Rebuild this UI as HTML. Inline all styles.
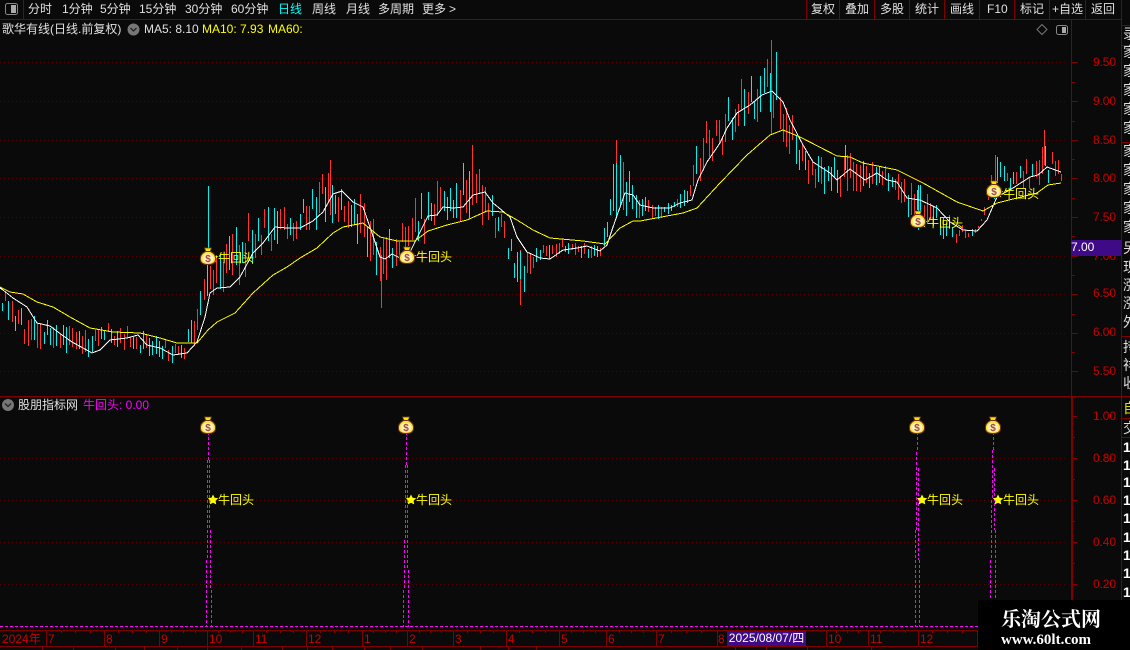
<!DOCTYPE html>
<html>
<head>
<meta charset="utf-8">
<style>
html,body{margin:0;padding:0;background:#0a0a0a}
#r{position:relative;width:1130px;height:650px;overflow:hidden;background:#0a0a0a;font-family:"Liberation Sans","WenQuanYi Zen Hei","Noto Sans CJK SC",sans-serif;font-size:12px;color:#e0e0e0}
#r div{position:absolute;white-space:nowrap}
.t{line-height:14px;height:14px}
.y{color:#ff0}
.p{color:#c80000;left:1093px;letter-spacing:-.1px}
.m{color:#c80000;top:632px;font-size:12px;line-height:14px}
.s{left:1123px;font-size:14px;line-height:16px;color:#ddd;width:7px;overflow:hidden}
.o{left:1123px;font-size:14px;font-weight:bold;color:#fff;line-height:16px;width:7px;overflow:hidden}
svg{position:absolute;left:0;top:0}
</style>
</head>
<body>
<div id="r">
<svg id="c" width="1130" height="650" viewBox="0 0 1130 650">
<defs>
<g id="bag">
<path d="M-3.500-9H3.500L2-5.500H-2Z" fill="#ffe000" stroke="#7a4a10" stroke-width=".7"/>
<path d="M-2.500-5.500H2.500C6.500-3.500 8 -.5 7.500 3C7 6.500 4 7.500 0 7.500C-4 7.500-7 6.500-7.500 3C-8-.5-6.500-3.500-2.500-5.500Z" fill="#ffe040" stroke="#6b3515" stroke-width="1"/>
<ellipse cx="0" cy="1.500" rx="5.500" ry="4.700" fill="#fff2b8"/>
<text x="0" y="5" text-anchor="middle" font-family="Liberation Sans" font-weight="bold" font-size="10" fill="#a04a40">$</text>
</g>
</defs>
<g id="grid" stroke="#520000" stroke-width="1" stroke-dasharray="1 3" shape-rendering="crispEdges">
<path d="M0 62.500H1068M0 101.500H1068M0 140.500H1068M0 178.500H1068M0 217.500H1068M0 256.500H1068M0 294.500H1068M0 333.500H1068M0 371.500H1068M0 458.500H1068M0 500.500H1068M0 542.500H1068M0 584.500H1068"/>
</g>
<g id="bars" stroke-width="1" shape-rendering="crispEdges"></g>
<polyline id="w" fill="none" stroke="#fff" stroke-width="1" shape-rendering="crispEdges"></polyline>
<polyline id="l" fill="none" stroke="#ff0" stroke-width="1" shape-rendering="crispEdges"></polyline>

<g fill="none" stroke="#800000" shape-rendering="crispEdges">
<path d="M0 19.500H1122M0 396.500H1130M0 630.500H978M0 646.500H978"/>
<path d="M1071.500 19V396M1071.500 397V630M1072.500 397V630M1121.500 0V630"/>
<path d="M23.500 0V19M806.500 0V19M839.500 0V19M874.500 0V19M909.500 0V19M944.500 0V19M979.500 0V19M1014.500 0V19M1049.500 0V19M1085.500 0V19"/>
<path d="M1071 62.500H1078M1071 82.500H1075M1071 101.500H1078M1071 121.500H1075M1071 140.500H1078M1071 159.500H1075M1071 178.500H1078M1071 198.500H1075M1071 217.500H1078M1071 236.500H1075M1071 256.500H1078M1071 275.500H1075M1071 294.500H1078M1071 314.500H1075M1071 333.500H1078M1071 352.500H1075M1071 371.500H1078"/>
<path d="M1072 416.500H1077M1072 437.500H1075M1072 458.500H1077M1072 479.500H1075M1072 500.500H1077M1072 521.500H1075M1072 542.500H1077M1072 563.500H1075M1072 584.500H1077M1072 605.500H1075"/>
<path d="M46.500 630V646M104.500 630V646M159.500 630V646M207.500 630V646M253.500 630V646M306.500 630V646M362.500 630V646M407.500 630V646M453.500 630V646M506.500 630V646M559.500 630V646M606.500 630V646M656.500 630V646M717.500 630V646M826.500 630V646M868.500 630V646M918.500 630V646M977.500 630V646"/>
<path d="M61.500 630V633M75.500 630V633M90.500 630V633M118.500 630V633M132.500 630V633M146.500 630V633M171.500 630V633M183.500 630V633M195.500 630V633M218.500 630V633M230.500 630V633M242.500 630V633M266.500 630V633M280.500 630V633M293.500 630V633M320.500 630V633M334.500 630V633M348.500 630V633M373.500 630V633M385.500 630V633M396.500 630V633M419.500 630V633M430.500 630V633M441.500 630V633M467.500 630V633M480.500 630V633M493.500 630V633M519.500 630V633M532.500 630V633M545.500 630V633M571.500 630V633M583.500 630V633M595.500 630V633M619.500 630V633M631.500 630V633M643.500 630V633M671.500 630V633M686.500 630V633M701.500 630V633M836.500 630V633M847.500 630V633M858.500 630V633M880.500 630V633M893.500 630V633M905.500 630V633M932.500 630V633M947.500 630V633M962.500 630V633"/>
<path d="M42.500 646V650M73.500 646V650M115.500 646V650M144.500 646V650M177.500 646V650M207.500 646V650M241.500 646V650M282.500 646V650M307.500 646V650M332.500 646V650M364.500 646V650M390.500 646V650M422.500 646V650M480.500 646V650M508.500 646V650M536.500 646V650M735.500 646V650M766.500 646V650M807.500 646V650M871.500 646V650"/>
<path d="M1122 25.500H1130M1122 45.500H1130M1122 142.500H1130M1122 418.500H1130M1122 437.500H1130"/>
<path d="M1122 336.500H1130"/>
</g>
<g fill="none" stroke="#f0f" stroke-width="1" stroke-dasharray="3 2" shape-rendering="crispEdges">
<path d="M0 626.500H978"/>
<path d="M208.500 417V460M207.500 460V560M206.500 560V627M209.500 460V530M210.500 530V590M211.500 590V627"/>
<path d="M406.500 417V465M405.500 465V540M404.500 540V590M403.500 590V627M407.500 465V570M408.500 570V627"/>
<path d="M917.500 417V452M916.500 452V530M915.500 530V627M918.500 468V560M919.500 560V627"/>
<path d="M993.500 417V450M992.500 450V500M991.500 500V560M990.500 560V627M994.500 468V530M995.500 530V627"/>
</g>
<path id="stars" fill="#ff0" d=""></path>
<use href="#bag" x="208" y="257"/>
<use href="#bag" x="407" y="256"/>
<use href="#bag" x="918" y="220"/>
<use href="#bag" x="994" y="190"/>
<use href="#bag" x="208" y="426"/>
<use href="#bag" x="406" y="426"/>
<use href="#bag" x="917" y="426"/>
<use href="#bag" x="993" y="426"/>
<!-- small icons -->
<rect x="5.500" y="3.500" width="12" height="11" rx="2" fill="none" stroke="#888"/>
<rect x="11" y="5" width="5" height="8" fill="#aaa"/>
<rect x="1056.500" y="25.500" width="11" height="9" rx="2" fill="none" stroke="#888"/>
<rect x="1062" y="27" width="4" height="6" fill="#aaa"/>
<path d="M1042 24.500L1047 29.500L1042 34.500L1037 29.500Z" fill="none" stroke="#777"/>
<circle cx="133.500" cy="29.500" r="6" fill="#777"/>
<path d="M130.500 28L133.500 31L136.500 28" fill="none" stroke="#222" stroke-width="1.300"/>
<circle cx="8" cy="405" r="6" fill="#777"/>
<path d="M5 403.500L8 406.500L11 403.500" fill="none" stroke="#222" stroke-width="1.300"/>
</svg>

<div class="t" style="left:28px;top:2px">分时</div>
<div class="t" style="left:62px;top:2px">1分钟</div>
<div class="t" style="left:100px;top:2px">5分钟</div>
<div class="t" style="left:139px;top:2px">15分钟</div>
<div class="t" style="left:185px;top:2px">30分钟</div>
<div class="t" style="left:231px;top:2px">60分钟</div>
<div class="t" style="left:278px;top:2px;color:#0ff">日线</div>
<div class="t" style="left:312px;top:2px">周线</div>
<div class="t" style="left:346px;top:2px">月线</div>
<div class="t" style="left:378px;top:2px">多周期</div>
<div class="t" style="left:422px;top:2px">更多</div>
<div class="t" style="left:449px;top:2px">&gt;</div>

<div class="t" style="left:811px;top:2px">复权</div>
<div class="t" style="left:845px;top:2px">叠加</div>
<div class="t" style="left:880px;top:2px">多股</div>
<div class="t" style="left:915px;top:2px">统计</div>
<div class="t" style="left:950px;top:2px">画线</div>
<div class="t" style="left:987px;top:2px">F10</div>
<div class="t" style="left:1020px;top:2px">标记</div>
<div class="t" style="left:1052px;top:2px">+自选</div>
<div class="t" style="left:1091px;top:2px">返回</div>

<div class="t" style="left:2px;top:22px">歌华有线(日线.前复权)</div>
<div class="t" style="left:144px;top:22px">MA5: 8.10</div>
<div class="t y" style="left:202px;top:22px">MA10: 7.93</div>
<div class="t y" style="left:268px;top:22px">MA60:</div>

<div class="t" style="left:18px;top:398px">股朋指标网</div>
<div class="t" style="left:83px;top:398px;color:#f0f">牛回头: 0.00</div>

<div class="t p" style="top:55px">9.50</div>
<div class="t p" style="top:94px">9.00</div>
<div class="t p" style="top:133px">8.50</div>
<div class="t p" style="top:171px">8.00</div>
<div class="t p" style="top:210px">7.50</div>
<div class="t p" style="top:249px">7.00</div>
<div class="t p" style="top:286px">6.50</div>
<div class="t p" style="top:325px">6.00</div>
<div class="t p" style="top:364px">5.50</div>
<div class="t p" style="top:409px">1.00</div>
<div class="t p" style="top:451px">0.80</div>
<div class="t p" style="top:493px">0.60</div>
<div class="t p" style="top:535px">0.40</div>
<div class="t p" style="top:577px">0.20</div>

<div class="t" style="left:1071px;top:240px;width:50px;height:16px;line-height:15px;background:#3f0a85;color:#fff">7.00</div>

<div class="t y" style="left:218px;top:251px">牛回头</div>
<div class="t y" style="left:416px;top:250px">牛回头</div>
<div class="t y" style="left:927px;top:216px">牛回头</div>
<div class="t y" style="left:1003px;top:187px">牛回头</div>
<div class="t y" style="left:218px;top:493px">牛回头</div>
<div class="t y" style="left:416px;top:493px">牛回头</div>
<div class="t y" style="left:927px;top:493px">牛回头</div>
<div class="t y" style="left:1003px;top:493px">牛回头</div>

<div class="s" style="top:26px">录</div>
<div class="s" style="top:44px">家</div><div class="s" style="top:63px">家</div><div class="s" style="top:82px">家</div><div class="s" style="top:101px">家</div><div class="s" style="top:120px">家</div>
<div class="s" style="top:143px">家</div><div class="s" style="top:162px">家</div><div class="s" style="top:181px">家</div><div class="s" style="top:200px">家</div><div class="s" style="top:219px">家</div>
<div class="s" style="top:240px">另</div>
<div class="s" style="top:259px">现</div><div class="s" style="top:277px">涨</div><div class="s" style="top:295px">涨</div><div class="s" style="top:314px">外</div>
<div class="s" style="top:339px">抟</div><div class="s" style="top:357px">祥</div><div class="s" style="top:375px">收</div>
<div class="s" style="top:400px;color:#dd0">自</div>
<div class="s" style="top:420px">交</div>
<div class="o" style="top:439px">1</div><div class="o" style="top:457px">1</div><div class="o" style="top:474px">1</div><div class="o" style="top:492px">1</div><div class="o" style="top:510px">1</div><div class="o" style="top:529px">1</div><div class="o" style="top:547px">1</div><div class="o" style="top:565px">1</div><div class="o" style="top:584px">1</div>

<div class="m" style="left:2px">2024年</div>
<div class="m" style="left:48px">7</div>
<div class="m" style="left:106px">8</div>
<div class="m" style="left:161px">9</div>
<div class="m" style="left:209px">10</div>
<div class="m" style="left:255px">11</div>
<div class="m" style="left:308px">12</div>
<div class="m" style="left:364px">1</div>
<div class="m" style="left:409px">2</div>
<div class="m" style="left:455px">3</div>
<div class="m" style="left:508px">4</div>
<div class="m" style="left:561px">5</div>
<div class="m" style="left:608px">6</div>
<div class="m" style="left:658px">7</div>
<div class="m" style="left:718px">8</div>
<div class="m" style="left:828px">10</div>
<div class="m" style="left:870px">11</div>
<div class="m" style="left:920px">12</div>
<div style="left:727px;top:631px;width:79px;height:15px;background:#3f0a85;color:#fff;line-height:15px;text-align:center">2025/08/07/四</div>

<div style="left:978px;top:600px;width:152px;height:50px;background:#000"></div>
<div style="left:978px;top:609px;width:146px;text-align:center;color:#fff;font:bold 20px/22px 'Liberation Serif','Noto Serif CJK SC',serif">乐淘公式网</div>
<div style="left:978px;top:632px;width:136px;text-align:center;color:#fff;font:bold 15px/16px 'Liberation Serif',serif">www.60lt.com</div>
</div>
<script>
var W=[0,288,3,290,13,298,27,307,37,323,50,326,62,335,72,342,83,348,92,353,100,350,110,340,127,338,138,335,147,345,160,348,173,355,187,353,197,342,205,317,210,293,217,288,230,287,240,277,253,253,263,243,275,227,287,228,300,228,313,221,323,212,333,194,342,191,353,202,363,207,372,233,380,257,385,259,392,254,400,258,410,252,428,216,437,215,443,207,453,208,463,207,473,195,485,192,493,203,510,217,517,237,527,252,540,258,550,259,563,250,577,248,587,246,600,251,607,245,613,227,625,193,633,195,640,205,653,208,670,208,680,203,692,200,698,180,707,162,720,143,727,128,737,113,750,105,762,95,772,91,783,102,790,120,803,145,813,162,830,173,837,180,850,169,865,180,877,173,887,180,897,182,907,198,920,200,937,208,950,222,963,230,977,231,987,220,997,197,1013,188,1030,177,1038,175,1047,167,1061,172];
var Y=[0,287,10,292,23,294,37,302,53,307,70,317,90,328,113,332,140,333,160,338,177,343,197,343,208,330,217,322,235,313,253,293,273,275,287,267,300,258,317,248,333,233,343,227,363,223,380,237,397,241,415,241,428,231,447,225,467,220,487,211,503,212,517,220,533,230,550,238,583,241,605,244,620,228,633,221,640,221,683,213,697,208,720,183,747,155,770,135,783,130,800,137,837,156,850,157,863,163,897,170,923,183,957,202,983,211,997,203,1017,198,1037,193,1048,185,1061,183];
var T=[0,288,30,310,60,320,80,330,100,322,130,325,160,335,180,345,195,310,205,250,215,250,225,240,240,220,260,200,275,200,290,210,310,190,330,160,345,180,360,190,370,215,385,225,395,230,405,215,415,190,430,180,450,180,470,150,485,180,500,210,515,245,530,250,560,235,580,240,600,245,610,190,616,140,625,160,640,195,670,200,690,180,700,125,720,110,740,70,760,70,771,50,785,90,800,140,830,160,846,145,870,160,900,170,920,185,935,200,960,225,980,225,990,170,996,155,1010,170,1030,155,1044,140,1062,165];
var B=[0,310,20,345,40,350,60,360,80,365,100,350,130,350,150,360,178,368,195,350,205,300,220,295,240,290,265,255,290,245,310,240,330,225,345,225,360,250,375,285,381,300,395,270,410,260,430,240,450,220,470,225,490,235,510,265,520,300,535,270,560,255,600,262,612,235,630,215,645,225,670,215,690,210,710,170,740,135,770,120,775,130,790,160,810,190,835,200,860,195,890,195,905,220,925,235,950,245,975,235,985,215,1000,190,1020,190,1050,185,1062,185];
function pts(a){var s=[];for(var i=0;i<a.length;i+=2)s.push(a[i]+","+a[i+1]);return s.join(" ")}
function at(a,x){for(var i=0;i<a.length-2;i+=2){if(x<=a[i+2]){return a[i+1]+(a[i+3]-a[i+1])*(x-a[i])/(a[i+2]-a[i])}}return a[a.length-1]}
document.getElementById("w").setAttribute("points",pts(W));
document.getElementById("l").setAttribute("points",pts(Y));
var seed=12345;function R(){seed=(seed*16807)%2147483647;return seed/2147483647}
var red="",cy="";
for(var x=2;x<1062;x+=3.2){
 var px=Math.round(x)+.5,t=at(T,x),b=at(B,x),h=b-t,len=h*(.3+.4*R()),y0=t+(h-len)*R(),seg="M"+px+" "+Math.round(y0)+"V"+Math.round(y0+len);
 if(R()<.5)red+=seg;else cy+=seg;
}
var sp=[[208.5,186,250,0],[771.5,40,135,1],[776.5,52,100,0],[616.5,140,195,1],[381.5,255,308,1],[472.5,145,205,1],[330.5,160,215,1],[1044.5,130,165,1],[520.5,250,305,1],[918.5,185,230,0],[845.5,145,170,0],[995.5,155,190,1]];
for(var i=0;i<sp.length;i++){var q=sp[i],g="M"+q[0]+" "+q[1]+"V"+q[2];if(q[3])red+=g;else cy+=g}
document.getElementById("bars").innerHTML='<path stroke="#ff3232" fill="none" d="'+red+'"/><path stroke="#00f0f0" fill="none" d="'+cy+'"/>';
function star(cx,cy,r){var d="";for(var i=0;i<10;i++){var a=-Math.PI/2+i*Math.PI/5,q=i%2?r*.5:r;d+=(i?"L":"M")+(cx+q*Math.cos(a)).toFixed(1)+" "+(cy+q*Math.sin(a)).toFixed(1)}return d+"Z"}
var st=[[213,258],[411,257],[922,223],[998,193],[213,500],[411,500],[922,500],[998,500]],sd="";
for(var j=0;j<st.length;j++)sd+=star(st[j][0],st[j][1],5.5);
document.getElementById("stars").setAttribute("d",sd);
</script>
</body>
</html>
